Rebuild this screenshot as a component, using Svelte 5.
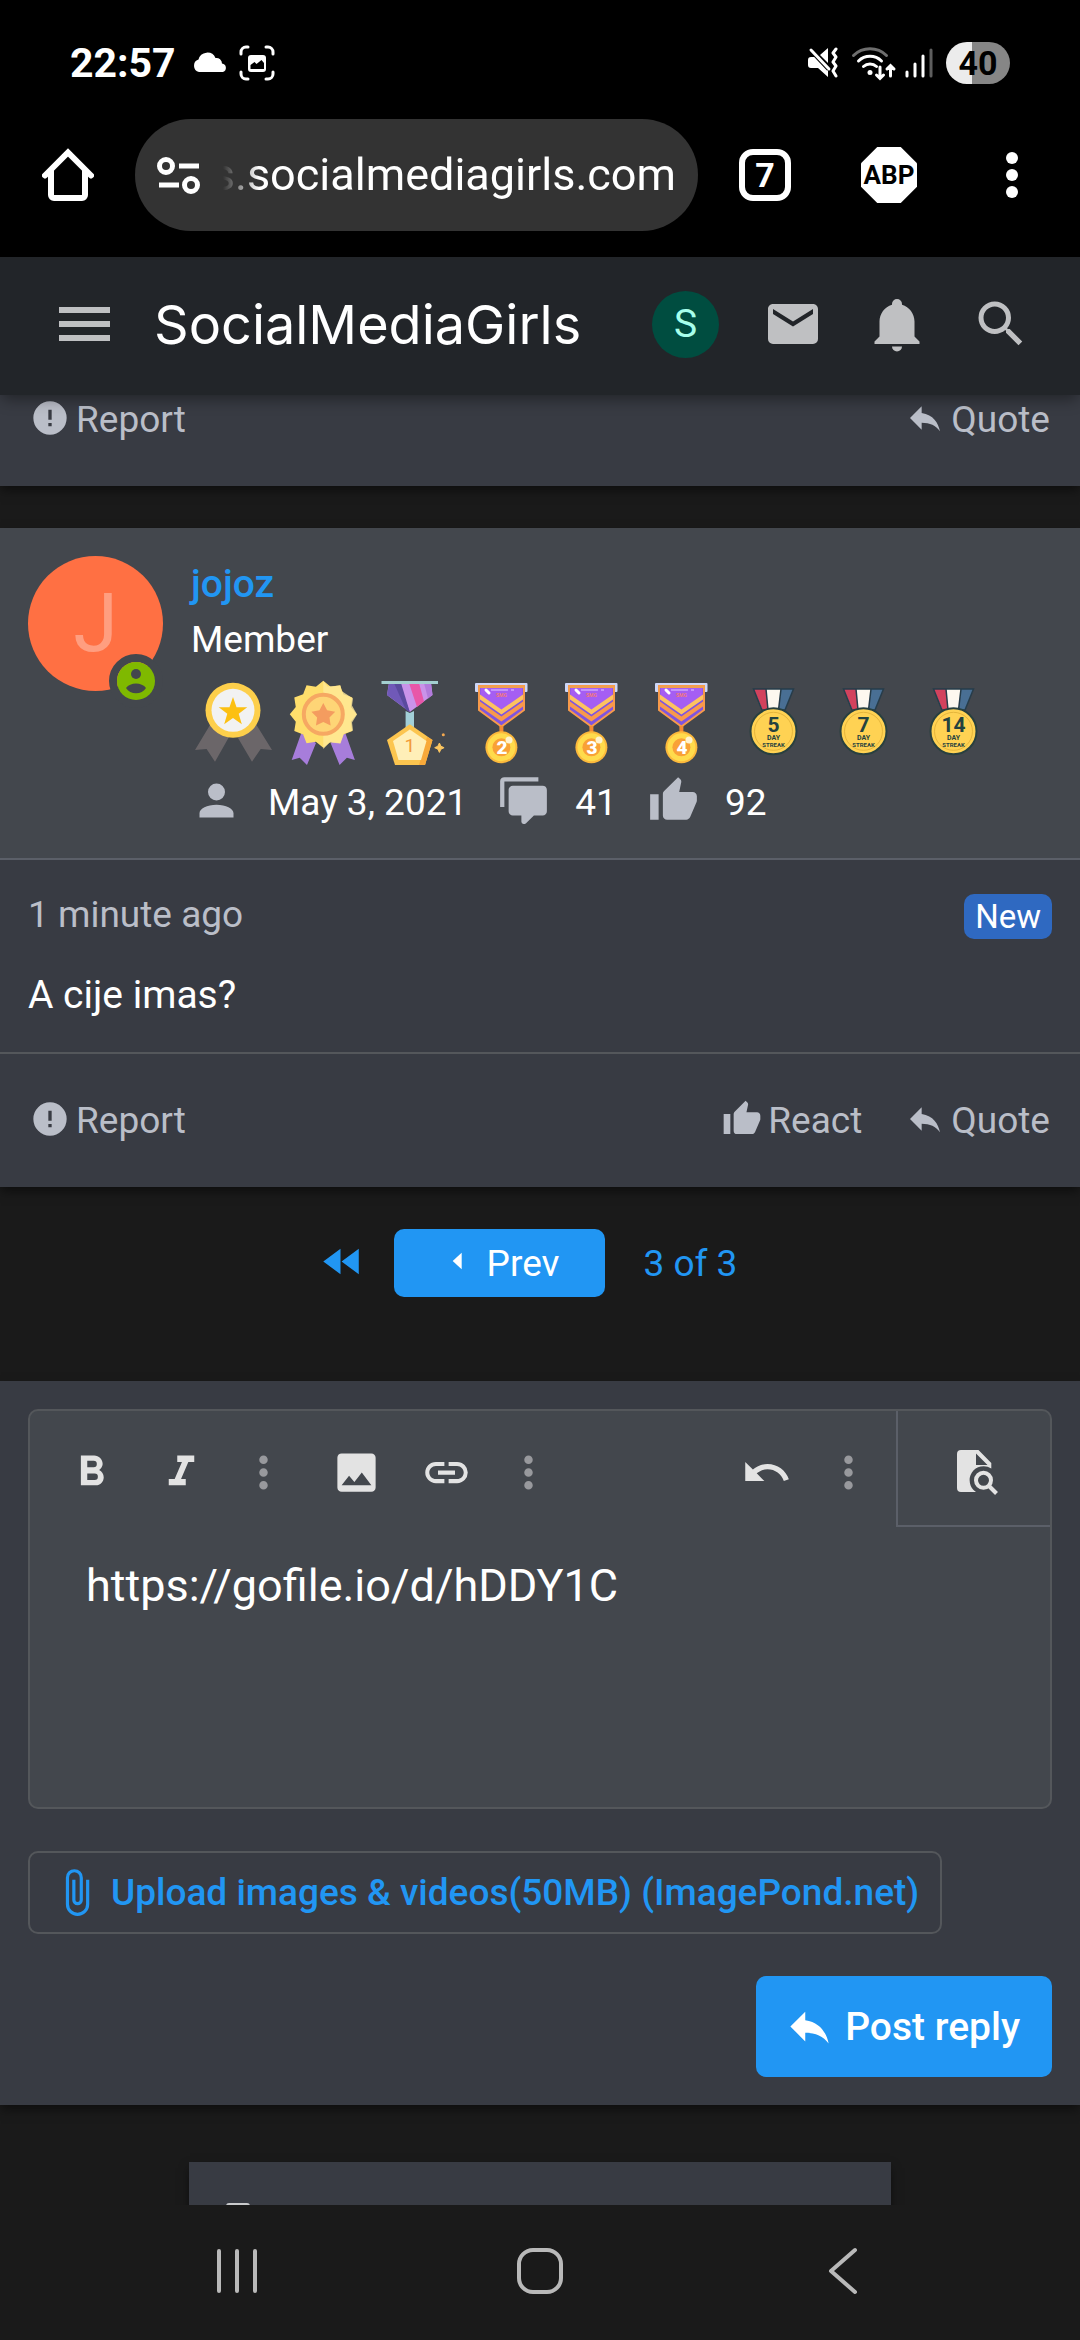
<script>
  let reply = $state('https://gofile.io/d/hDDY1C')

  const icons = {
    mail: 'M20,8L12,13L4,8V6L12,11L20,6M20,4H4C2.89,4 2,4.89 2,6V18A2,2 0 0,0 4,20H20A2,2 0 0,0 22,18V6C22,4.89 21.1,4 20,4Z',
    bell: 'M21,19V20H3V19L5,17V11C5,7.9 7.03,5.17 10,4.29C10,4.19 10,4.1 10,4A2,2 0 0,1 12,2A2,2 0 0,1 14,4C14,4.1 14,4.19 14,4.29C16.97,5.17 19,7.9 19,11V17L21,19M14,21A2,2 0 0,1 12,23A2,2 0 0,1 10,21',
    search: 'M9.5,3A6.5,6.5 0 0,1 16,9.5C16,11.11 15.41,12.59 14.44,13.73L14.71,14H15.5L20.5,19L19,20.5L14,15.5V14.71L13.73,14.44C12.59,15.41 11.11,16 9.5,16A6.5,6.5 0 0,1 3,9.5A6.5,6.5 0 0,1 9.5,3M9.5,5C7,5 5,7 5,9.5C5,12 7,14 9.5,14C12,14 14,12 14,9.5C14,7 12,5 9.5,5Z',
    report: 'M13,13H11V7H13M13,17H11V15H13M12,2A10,10 0 0,0 2,12A10,10 0 0,0 12,22A10,10 0 0,0 22,12A10,10 0 0,0 12,2Z',
    reply: 'M10,9V5L3,12L10,19V14.9C15,14.9 18.5,16.5 21,20C20,15 17,10 10,9Z',
    like: 'M23,10C23,8.89 22.1,8 21,8H14.68L15.64,3.43C15.66,3.33 15.67,3.22 15.67,3.11C15.67,2.7 15.5,2.32 15.23,2.05L14.17,1L7.59,7.58C7.22,7.95 7,8.45 7,9V19A2,2 0 0,0 9,21H18C18.83,21 19.54,20.5 19.84,19.78L22.86,12.73C22.95,12.5 23,12.26 23,12V10M1,21H5V9H1V21Z',
    account: 'M12,4A4,4 0 0,1 16,8A4,4 0 0,1 12,12A4,4 0 0,1 8,8A4,4 0 0,1 12,4M12,14C16.42,14 20,15.79 20,18V20H4V18C4,15.79 7.58,14 12,14Z',
    comments: 'M12,23A1,1 0 0,1 11,22V19H7A2,2 0 0,1 5,17V7C5,5.89 5.9,5 7,5H21A2,2 0 0,1 23,7V17A2,2 0 0,1 21,19H16.9L13.2,22.71C13,22.9 12.75,23 12.5,23H12M3,15H1V3A2,2 0 0,1 3,1H19V3H3V15Z',
    bold: 'M13.5,15.5H10V12.5H13.5A1.5,1.5 0 0,1 15,14A1.5,1.5 0 0,1 13.5,15.5M10,6.5H13A1.5,1.5 0 0,1 14.5,8A1.5,1.5 0 0,1 13,9.5H10M15.6,10.79C16.57,10.11 17.25,9 17.25,8C17.25,5.74 15.5,4 13.25,4H7V18H14.04C16.14,18 17.75,16.3 17.75,14.21C17.75,12.69 16.89,11.39 15.6,10.79Z',
    italic: 'M10,4V7H12.21L8.79,15H6V18H14V15H11.79L15.21,7H18V4H10Z',
    dots: 'M12,16A2,2 0 0,1 14,18A2,2 0 0,1 12,20A2,2 0 0,1 10,18A2,2 0 0,1 12,16M12,10A2,2 0 0,1 14,12A2,2 0 0,1 12,14A2,2 0 0,1 10,12A2,2 0 0,1 12,10M12,4A2,2 0 0,1 14,6A2,2 0 0,1 12,8A2,2 0 0,1 10,6A2,2 0 0,1 12,4Z',
    image: 'M8.5,13.5L11,16.5L14.5,12L19,18H5M21,19V5C21,3.89 20.1,3 19,3H5A2,2 0 0,0 3,5V19A2,2 0 0,0 5,21H19A2,2 0 0,0 21,19Z',
    link: 'M3.9,12C3.9,10.29 5.29,8.9 7,8.9H11V7H7A5,5 0 0,0 2,12A5,5 0 0,0 7,17H11V15.1H7C5.29,15.1 3.9,13.71 3.9,12M8,13H16V11H8V13M17,7H13V8.9H17C18.71,8.9 20.1,10.29 20.1,12C20.1,13.71 18.71,15.1 17,15.1H13V17H17A5,5 0 0,0 22,12A5,5 0 0,0 17,7Z',
    undo: 'M12.5,8C9.85,8 7.45,9 5.6,10.6L2,7V16H11L7.38,12.38C8.77,11.22 10.54,10.5 12.5,10.5C16.04,10.5 19.08,12.81 20.15,16L22.52,15.22C21.13,11.03 17.15,8 12.5,8Z',
    clip: 'M16.5,6V17.5A4,4 0 0,1 12.5,21.5A4,4 0 0,1 8.5,17.5V5A2.5,2.5 0 0,1 11,2.5A2.5,2.5 0 0,1 13.5,5V15.5A1,1 0 0,1 12.5,16.5A1,1 0 0,1 11.5,15.5V6H10V15.5A2.5,2.5 0 0,0 12.5,18A2.5,2.5 0 0,0 15,15.5V5A4,4 0 0,0 11,1A4,4 0 0,0 7,5V17.5A5.5,5.5 0 0,0 12.5,23A5.5,5.5 0 0,0 18,17.5V6H16.5Z',
    first: 'M12,6V18L3.9,12L12,6M20.6,6V18L12.5,12L20.6,6Z',
    prev: 'M13,7V17L7.6,12L13,7Z'
  }

  const tools = [
    [{ icon: 'bold', label: 'Bold' }, { icon: 'italic', label: 'Italic' }, { icon: 'dots', label: 'More text options' }],
    [{ icon: 'image', label: 'Insert image' }, { icon: 'link', label: 'Insert link' }, { icon: 'dots', label: 'More insert options' }],
    [{ icon: 'undo', label: 'Undo' }, { icon: 'dots', label: 'More options' }]
  ]

  const stats = [
    { icon: 'account', value: 'May 3, 2021' },
    { icon: 'comments', value: '41' },
    { icon: 'like', value: '92' }
  ]

  const ranks = ['2', '3', '4']
  const streaks = ['5', '7', '14']

  // Alternates between two radii to get a star or a burst
  function star(cx, cy, tips, outer, inner) {
    const points = []
    for (let i = 0; i < tips * 2; i++) {
      const r = i % 2 ? inner : outer
      const a = (Math.PI * i) / tips
      points.push(`${(cx + r * Math.sin(a)).toFixed(2)},${(cy - r * Math.cos(a)).toFixed(2)}`)
    }
    return points.join(' ')
  }
</script>

{#snippet icon(name)}
  <svg class="icon" viewBox="0 0 24 24" aria-hidden="true"><path d={icons[name]} fill="currentColor" /></svg>
{/snippet}

<div class="screen">
  <div class="device-top">
    <div class="status-bar">
      <span class="clock">22:57</span>
      <svg class="cloud" width="36" height="36" viewBox="0 0 36 36" aria-hidden="true">
        <path d="M7 27a6.500 6.500 0 0 1-.5-12.500A9 9 0 0 1 23.500 13a5.500 5.500 0 0 1 6.500 5.500A4.400 4.400 0 0 1 31 27Z" fill="#fff" />
      </svg>
      <svg width="36" height="36" viewBox="0 0 36 36" aria-hidden="true">
        <path d="M2 9V7a5 5 0 0 1 5-5h2M27 2h2a5 5 0 0 1 5 5v2M34 27v2a5 5 0 0 1-5 5h-2M9 34H7a5 5 0 0 1-5-5v-2" fill="none" stroke="#fff" stroke-width="3" stroke-linecap="round" />
        <rect x="9" y="10" width="18" height="17" rx="3" fill="#fff" />
        <path d="M11.500 24v-4l4-3 2 2 5-4 2.500 3v6Z" fill="#000" />
      </svg>
      <span class="spacer"></span>
      <svg width="30" height="32" viewBox="0 0 30 32" aria-hidden="true">
        <path d="M3 10h5l12 12v8L10 21H3a3 3 0 0 1-3-3v-5a3 3 0 0 1 3-3ZM12 8l8-7v15Z" fill="#fff" />
        <path d="M3 3l18 19" stroke="#000" stroke-width="5" />
        <path d="M3 3l18 19" stroke="#fff" stroke-width="3" stroke-linecap="round" />
        <path d="M28 2l-3 4 3 4-3 5 3 4-3 5 3 5" fill="none" stroke="#fff" stroke-width="3" stroke-linejoin="round" stroke-linecap="round" />
      </svg>
      <svg class="wifi" width="46" height="36" viewBox="0 0 46 36" aria-hidden="true">
        <path d="M2.500 10.500a23.500 23.500 0 0 1 33 0" fill="none" stroke="#6e6e6e" stroke-width="3" stroke-linecap="round" />
        <g fill="none" stroke="#fff" stroke-width="3" stroke-linecap="round">
          <path d="M7.500 16a16.500 16.500 0 0 1 23 0M12.500 21.500a9.500 9.500 0 0 1 13 0" />
          <path d="M29 22v11M25.500 30l3.500 3.500 3.500-3.500M39.500 31V21M36 24l3.500-3.500L43 24" />
        </g>
        <circle cx="19" cy="27.500" r="2.500" fill="#fff" />
      </svg>
      <svg class="signal" width="28" height="32" viewBox="0 0 28 32" aria-hidden="true">
        <g stroke="#fff" stroke-width="3" stroke-linecap="round">
          <path d="M2 25v4M10 17v12M18 9v20" />
          <path d="M26 3v26" stroke="#5e5e5e" />
        </g>
      </svg>
      <span class="battery">40</span>
    </div>

    <div class="browser-bar">
      <button class="plain" aria-label="Home">
        <svg width="52" height="54" viewBox="0 0 52 54" aria-hidden="true">
          <path d="M3 27.500L26 4.500l23 23M9 22v25a3 3 0 0 0 3 3h28a3 3 0 0 0 3-3V22" fill="none" stroke="#fff" stroke-width="6" stroke-linecap="round" />
        </svg>
      </button>
      <div class="address">
        <svg width="44" height="38" viewBox="0 0 44 38" aria-hidden="true">
          <g fill="none" stroke="#fff" stroke-width="5">
            <circle cx="9" cy="10" r="6.500" /><path d="M22 10h20M2 29h20" /><circle cx="34" cy="29" r="6.500" />
          </g>
        </svg>
        <div class="address-text">
          <input type="text" value="s.socialmediagirls.com" aria-label="Address" />
        </div>
      </div>
      <div class="browser-actions">
        <button class="tabs" aria-label="Open tabs">7</button>
        <button class="abp" aria-label="Ad blocker">ABP</button>
        <button class="plain" aria-label="Browser menu">
          <svg width="50" height="52" viewBox="0 0 50 52" aria-hidden="true">
            <g fill="#fff"><circle cx="25" cy="9" r="6" /><circle cx="25" cy="26" r="6" /><circle cx="25" cy="43" r="6" /></g>
          </svg>
        </button>
      </div>
    </div>
  </div>

  <header class="site-nav">
    <button class="plain" aria-label="Menu">
      <svg width="51" height="34" viewBox="0 0 51 34" aria-hidden="true">
        <path d="M0 3h51M0 17h51M0 31h51" stroke="currentColor" stroke-width="6" />
      </svg>
    </button>
    <a class="site-title" href="/">SocialMediaGirls</a>
    <nav class="site-actions">
      <a class="me" href="/account">S</a>
      <a href="/messages" aria-label="Messages">{@render icon('mail')}</a>
      <a href="/alerts" aria-label="Alerts">{@render icon('bell')}</a>
      <a href="/search" aria-label="Search">{@render icon('search')}</a>
    </nav>
  </header>

  <main>
    <article class="card post-end">
      <footer class="post-actions">
        <a href="/report">{@render icon('report')}Report</a>
        <span class="spacer"></span>
        <a href="/quote">{@render icon('reply')}Quote</a>
      </footer>
    </article>

    <article class="card post">
      <header class="user">
        <div class="avatar">
          J
          <span class="online">
            <svg width="38" height="38" viewBox="0 0 38 38" aria-hidden="true">
              <circle cx="19" cy="19" r="19" fill="#7fb900" />
              <circle cx="19" cy="12" r="5" fill="#43474d" />
              <path d="M9 26c4-6 16-6 20 0-4 7-16 7-20 0Z" fill="#43474d" />
            </svg>
          </span>
        </div>
        <div class="user-info">
          <a class="user-name" href="/members/jojoz">jojoz</a>
          <div class="user-title">Member</div>

          <div class="medals">
            <svg class="medal" viewBox="0 0 84 84" aria-hidden="true">
              <path d="M19 44L4 69l11.600-1L24 80.700 38 56ZM65.500 44L81 69l-11.300-1L61 80.700 47 57Z" fill="#6b6669" />
              <circle cx="42" cy="29.300" r="27.500" fill="#fdcf4b" />
              <circle cx="42" cy="29.300" r="21.500" fill="#f2f2f2" />
              <polygon points={star(42, 31, 5, 15, 6)} fill="#fcc012" />
            </svg>

            <svg class="medal" viewBox="0 0 84 84" aria-hidden="true">
              <path d="M20.300 52L10.700 79l8-2.300L26 84l9-22ZM64.300 52l9.600 27-8-2.300-7.300 7.300-9-22Z" fill="#a77ddb" />
              <polygon points={star(42.3, 33.3, 12, 33.5, 28.5)} fill="#fede6c" />
              <path d="M42.300 0l4.200 5.600 13-1 1 5.400 11.500 7.500-1 7 5 9-5 8 1 8-9 3-3.500 10-11-1-6.200 6.500Z" fill="#ffe998" opacity=".8" />
              <circle cx="42.300" cy="33.300" r="19.500" fill="#fed576" stroke="#f6a862" stroke-width="4" />
              <polygon points={star(42.3, 34.5, 5, 12.5, 6.5)} fill="#f49c5f" />
            </svg>

            <svg class="medal" viewBox="0 0 84 84" aria-hidden="true">
              <path d="M18 2l-2 12 22.800 17L61.500 14 60 2Z" fill="#c993ea" />
              <path d="M18 2l-2 12 22.800 17L28 2Z" fill="#7059b8" />
              <path d="M23 2l12 27 3.800 2L30 2Z" fill="#5a4a9e" />
              <path d="M38 2l8 24 7-5.500L48 2Z" fill="#e857a8" />
              <path d="M53 2l4 15.500 4.500-3.500L60 2Z" fill="#b27bdc" />
              <path d="M10.500 0H67v3H10.500Z" fill="#a3cfd0" />
              <path d="M34.600 30l4.200 2 4.200-2v17h-8.400Z" fill="#a3d0d8" />
              <path d="M38.800 43.300L61.500 59 54 84H24l-8-25Z" fill="#fcc54f" />
              <path d="M61.500 59L54 84h-6l8-28Z" fill="#f8a93a" />
              <path d="M38.800 48.500L55.500 60 50 79H27.500l-5.500-19Z" fill="#ffefb8" />
              <text x="38.800" y="71" font-size="19" text-anchor="middle" fill="#f29b3a">1</text>
              <path d="M68.400 62l1.500 3.200 3.200 1.500-3.200 1.500-1.500 3.200-1.500-3.200-3.200-1.500 3.200-1.500Z" fill="#fcc660" stroke="#fcc660" />
              <circle cx="72.300" cy="53.700" r="1.500" fill="#f5a94f" />
            </svg>

            {#each ranks as rank}
              <svg class="medal" viewBox="0 0 84 84" aria-hidden="true">
                <rect x="14" y="2" width="52.500" height="9" rx="1" fill="#cdd6f7" />
                <path d="M18 5h45v24L40.400 45.500 18 29Z" fill="#7f54e0" stroke="#f79a4b" stroke-width="2" />
                <path d="M19.500 7h42v8L40.400 30l-21-15Z" fill="#a55ef3" />
                <path d="M19 13.500l21.400 15L62 13.500v5L40.400 33.500 19 18.500Z" fill="#fdc35f" />
                <path d="M19 20.500l21.400 15L62 20.500v5L40.400 40.500 19 25.500Z" fill="#f9994c" />
                <path d="M18 6h45" stroke="#f0a050" stroke-width="2" />
                <path d="M30 9h17M50 9h3" stroke="#d3abff" stroke-width="2" opacity=".7" />
                <path d="M25 9l3 3" stroke="#fff" stroke-width="3" stroke-linecap="round" />
                <text x="40.400" y="16" font-size="5" font-weight="700" text-anchor="middle" fill="#f27a7a">SMG</text>
                <path d="M40.400 45v7" stroke="#f58a33" stroke-width="4" />
                <circle cx="40.400" cy="66.300" r="16" fill="#fcb93c" />
                <circle cx="40.400" cy="66.300" r="14" fill="#ffdb4c" />
                <circle cx="40.400" cy="66.300" r="9" fill="#f9a136" />
                <circle cx="48" cy="59" r="3.500" fill="#fff3d0" />
                <text x="41" y="73" font-size="19" font-weight="900" text-anchor="middle" fill="#fff">{rank}</text>
              </svg>
            {/each}

            {#each streaks as days}
              <svg class="medal" viewBox="0 0 84 84" aria-hidden="true">
                <path d="M22.500 8h40L54 29H31Z" fill="#fdf8ef" />
                <path d="M22.500 8h12.500l2 21h-5.500Z" fill="#d2425d" />
                <path d="M50 8h12.500L54 29h-6.500Z" fill="#496f94" />
                <path d="M22.500 8h40L54 29H31ZM35 8l2 21M50 8l-2.500 21" fill="none" stroke="#263c4a" stroke-width="1.500" />
                <circle cx="42.500" cy="50.300" r="23" fill="#ffd253" stroke="#28403f" stroke-width="2" />
                <circle cx="42.500" cy="50.300" r="19" fill="none" stroke="#e5b63c" />
                <g text-anchor="middle" fill="#24423f" font-weight="700">
                  <text x="42.500" y="51" font-size="21">{days}</text>
                  <text x="42.500" y="59" font-size="7">DAY</text>
                  <text x="42.500" y="66" font-size="6">STREAK</text>
                </g>
              </svg>
            {/each}
          </div>

          <div class="stats">
            {#each stats as stat}
              <span class="stat">{@render icon(stat.icon)}{stat.value}</span>
            {/each}
          </div>
        </div>
      </header>

      <div class="post-body">
        <div class="post-meta">
          <time>1 minute ago</time>
          <span class="badge">New</span>
        </div>
        <p>A cije imas?</p>
      </div>

      <footer class="post-actions">
        <a href="/report">{@render icon('report')}Report</a>
        <span class="spacer"></span>
        <a href="/react">{@render icon('like')}React</a>
        <a href="/quote">{@render icon('reply')}Quote</a>
      </footer>
    </article>

    <nav class="pager">
      <a class="first" href="/page-1" aria-label="First page">{@render icon('first')}</a>
      <a class="prev" href="/page-2">{@render icon('prev')}Prev</a>
      <a class="current" href="/page-3">3 of 3</a>
    </nav>

    <form class="card reply">
      <div class="editor">
        <div class="toolbar">
          {#each tools as group}
            <div class="tool-group">
              {#each group as tool}
                <button type="button" class="tool" class:more={tool.icon === 'dots'} aria-label={tool.label}>
                  {@render icon(tool.icon)}
                </button>
              {/each}
            </div>
          {/each}
          <button type="button" class="preview" aria-label="Preview">
            <svg width="48" height="48" viewBox="0 0 48 48" aria-hidden="true">
              <path d="M8 2h17.500L38.300 15v5.500A14 14 0 0 0 23 44H8a4 4 0 0 1-4-4V6a4 4 0 0 1 4-4ZM23 5.500V17h11.500Z" fill="currentColor" fill-rule="evenodd" />
              <circle cx="30.500" cy="32.300" r="7.500" fill="none" stroke="currentColor" stroke-width="4" />
              <path d="M35.500 37.500l8 8" stroke="currentColor" stroke-width="4" />
            </svg>
          </button>
        </div>
        <textarea bind:value={reply} aria-label="Reply" spellcheck="false"></textarea>
      </div>
      <button type="button" class="upload">{@render icon('clip')}Upload images &amp; videos(50MB) (ImagePond.net)</button>
      <button type="button" class="submit">{@render icon('reply')}Post reply</button>
    </form>

    <aside class="card notice">
      <svg width="24" height="30" viewBox="0 0 24 30" aria-hidden="true"><rect width="24" height="30" rx="3" fill="#c9cacc" /></svg>
    </aside>
  </main>

  <div class="device-nav">
    <button class="plain" aria-label="Recent apps">
      <svg width="48" height="50" viewBox="0 0 48 50" aria-hidden="true">
        <path d="M6 5v40M24 5v40M42 5v40" stroke="#b9b9b9" stroke-width="4" stroke-linecap="round" />
      </svg>
    </button>
    <button class="plain" aria-label="Home screen">
      <svg width="48" height="50" viewBox="0 0 48 50" aria-hidden="true">
        <rect x="3" y="4" width="42" height="42" rx="14" fill="none" stroke="#b9b9b9" stroke-width="4" />
      </svg>
    </button>
    <button class="plain" aria-label="Back">
      <svg width="48" height="50" viewBox="0 0 48 50" aria-hidden="true">
        <path d="M36 4L12 25l24 21" fill="none" stroke="#b9b9b9" stroke-width="4" stroke-linecap="round" stroke-linejoin="round" />
      </svg>
    </button>
  </div>
</div>

<style>
  :global(body) {
    background: #1a1a1a;
  }

  .screen {
    --panel: #383b43;
    --panel-alt: #43474d;
    --line: #54575b;
    --muted: #babec8;
    --blue: #2196f3;
    display: flex;
    flex-direction: column;
    height: 100vh;
    overflow: hidden;
    font-family: Roboto, 'Liberation Sans', sans-serif;
    font-size: 37px;
    color: #fff;
  }

  .screen,
  .screen * {
    box-sizing: border-box;
  }

  a {
    color: inherit;
    text-decoration: none;
  }

  button,
  input,
  textarea {
    font-family: inherit;
    color: inherit;
  }

  svg {
    display: block;
    flex-shrink: 0;
  }

  .plain {
    padding: 0;
    border: 0;
    background: none;
  }

  .spacer {
    flex: 1;
  }

  .icon {
    width: 51px;
    height: 51px;
  }

  /* Phone status bar */
  .device-top {
    background: #000;
  }

  .status-bar {
    display: flex;
    align-items: center;
    padding: 42px 70px 35px;
  }
  .clock {
    font-size: 41px;
    font-weight: 700;
    line-height: 42px;
  }
  .cloud {
    margin: 0 11px 0 16px;
  }
  .wifi {
    margin: 0 8px 0 13px;
  }
  .signal {
    margin-right: 13px;
  }
  .battery {
    width: 64px;
    border-radius: 21px;
    background: linear-gradient(to right, #ececec 40%, #868686 40%);
    color: #000;
    font-size: 34px;
    font-weight: 700;
    line-height: 42px;
    text-align: center;
  }

  /* Browser bar */
  .browser-bar {
    display: flex;
    align-items: center;
    gap: 41px;
    padding: 0 43px 26px 42px;
  }
  .address {
    flex: 1;
    min-width: 0;
    display: flex;
    align-items: center;
    gap: 22px;
    height: 112px;
    padding: 0 22px;
    border-radius: 56px;
    background: #333;
  }
  .address-text {
    flex: 1;
    min-width: 0;
    display: flex;
    justify-content: flex-end;
    overflow: hidden;
    mask-image: linear-gradient(to right, transparent, #000 36px);
  }
  .address input {
    flex: none;
    width: 480px;
    padding: 0;
    border: 0;
    background: none;
    font-size: 45px;
    line-height: 60px;
    text-align: right;
  }
  .browser-actions {
    display: flex;
    align-items: center;
    gap: 70px;
  }
  .tabs {
    width: 52px;
    height: 52px;
    padding: 0;
    border: 6px solid #fff;
    border-radius: 14px;
    background: none;
    font-size: 34px;
    font-weight: 700;
    line-height: 40px;
  }
  .abp {
    width: 56px;
    height: 56px;
    padding: 0;
    border: 0;
    background: #fff;
    clip-path: polygon(29% 0, 71% 0, 100% 29%, 100% 71%, 71% 100%, 29% 100%, 0 71%, 0 29%);
    color: #000;
    font-size: 26px;
    font-weight: 700;
    line-height: 56px;
  }

  /* Site header */
  .site-nav {
    position: relative;
    z-index: 1;
    display: flex;
    align-items: center;
    min-height: 138px;
    padding: 0 49px 4px 59px;
    background: #222529;
    box-shadow: 0 6px 14px -2px rgb(0 0 0 / 40%);
    color: #bfc0c2;
  }
  .site-title {
    flex: 1;
    margin-left: 44px;
    color: #fff;
    font-family: Inter, sans-serif;
    font-size: 54px;
  }
  .site-actions {
    display: flex;
    align-items: center;
    gap: 44px;
  }
  .site-actions .icon {
    width: 60px;
    height: 60px;
  }
  .me {
    width: 67px;
    border-radius: 50%;
    background: #004d40;
    color: #a7ffeb;
    font-size: 39px;
    line-height: 67px;
    text-align: center;
  }

  /* Posts */
  main {
    flex: 1;
    min-height: 0;
    overflow: hidden;
  }

  .card {
    background: var(--panel);
    box-shadow: 0 5px 10px -1px rgb(0 0 0 / 50%);
  }

  .post-end {
    display: flex;
    flex-direction: column;
    justify-content: flex-end;
    height: 91px;
    margin-bottom: 42px;
  }

  .post-actions {
    display: flex;
    flex-shrink: 0;
    align-items: center;
    gap: 43px;
    min-height: 133px;
    padding: 0 30px;
    color: var(--muted);
  }
  .post-actions a {
    display: flex;
    align-items: center;
    gap: 6px;
  }
  .post-actions .icon {
    width: 40px;
    height: 40px;
    margin-bottom: 4px;
  }

  .user {
    display: flex;
    gap: 28px;
    padding: 28px;
    border-bottom: 2px solid #5b5f68;
    background: var(--panel-alt);
  }
  .avatar {
    position: relative;
    flex-shrink: 0;
    width: 135px;
    height: 135px;
    border-radius: 50%;
    background: #ff7043;
    color: #ff9e80;
    font-size: 81px;
    line-height: 135px;
    text-align: center;
  }
  .online {
    position: absolute;
    right: 0;
    bottom: -17px;
    border: 8px solid var(--panel-alt);
    border-radius: 50%;
  }
  .user-name {
    display: block;
    color: var(--blue);
    font-size: 39px;
    font-weight: 500;
    line-height: 56px;
  }
  .user-title {
    line-height: 56px;
  }
  .medals {
    display: flex;
    flex-wrap: wrap;
    gap: 6px;
    margin: 13px 0 10px;
  }
  .medal {
    width: 84px;
    height: 84px;
    overflow: visible;
  }
  .stats {
    display: flex;
    gap: 31px;
  }
  .stat {
    display: flex;
    align-items: center;
    gap: 26px;
  }
  .stat .icon {
    margin-bottom: 4px;
    color: var(--muted);
  }

  .post-body {
    padding: 34px 28px 28px;
    border-bottom: 2px solid var(--line);
  }
  .post-meta {
    display: flex;
    justify-content: space-between;
    align-items: flex-start;
    color: var(--muted);
    line-height: 42px;
  }
  .badge {
    padding: 0 11px;
    border-radius: 10px;
    background: #2f69c1;
    color: #fff;
    font-size: 33px;
    line-height: 45px;
  }
  .post-body p {
    margin: 27px 0 0;
    font-size: 39px;
    line-height: 58px;
  }

  /* Pager */
  .pager {
    display: flex;
    justify-content: center;
    align-items: center;
    gap: 28px;
    padding: 42px 0 84px;
    color: var(--blue);
  }
  .prev {
    display: flex;
    align-items: center;
    gap: 7px;
    height: 68px;
    padding: 0 46px;
    border-radius: 10px;
    background: var(--blue);
    color: #fff;
  }
  .prev .icon {
    width: 40px;
    height: 40px;
  }
  .pager .icon {
    margin-bottom: 4px;
  }
  .current {
    padding: 0 28px 0 10px;
  }

  /* Reply form */
  .reply {
    display: flex;
    flex-direction: column;
    align-items: flex-start;
    gap: 42px;
    padding: 28px;
  }
  .editor {
    align-self: stretch;
    border: 2px solid var(--line);
    border-radius: 10px;
    background: var(--panel-alt);
  }
  .toolbar {
    display: flex;
    gap: 10px;
    height: 116px;
    padding-left: 16px;
  }
  .tool-group {
    display: flex;
    padding-top: 6px;
  }
  .tool-group:nth-child(3) {
    margin-left: auto;
  }
  .tool {
    display: flex;
    justify-content: center;
    align-items: center;
    width: 90px;
    padding: 0;
    border: 0;
    background: none;
    color: #e3e3e3;
  }
  .more {
    width: 75px;
    color: #98999d;
  }
  .preview {
    display: flex;
    justify-content: center;
    align-items: center;
    width: 154px;
    padding: 8px 0 0 6px;
    border: solid #5b5f68;
    border-width: 0 0 2px 2px;
    background: none;
    color: #e3e3e3;
  }
  textarea {
    display: block;
    width: 100%;
    height: 280px;
    padding: 26px 56px;
    border: 0;
    background: none;
    font-size: 45px;
    line-height: 66px;
    resize: none;
  }
  .upload,
  .submit {
    display: flex;
    align-items: center;
    border-radius: 10px;
    font-weight: 500;
  }
  .upload {
    gap: 9px;
    height: 83px;
    padding: 0 21px;
    border: 2px solid var(--line);
    background: none;
    color: var(--blue);
    font-size: 37px;
  }
  .submit {
    align-self: flex-end;
    gap: 10px;
    height: 101px;
    padding: 0 32px 0 28px;
    border: 0;
    background: var(--blue);
    font-size: 39px;
  }

  .notice {
    width: 65%;
    margin: 57px auto 0;
    padding: 41px 37px;
  }

  /* Phone navigation */
  .device-nav {
    display: grid;
    grid-template-columns: repeat(3, 1fr);
    justify-items: center;
    align-items: center;
    height: 135px;
    padding: 0 86px 4px;
    position: relative;
    background: #1a1a1a;
  }
</style>
